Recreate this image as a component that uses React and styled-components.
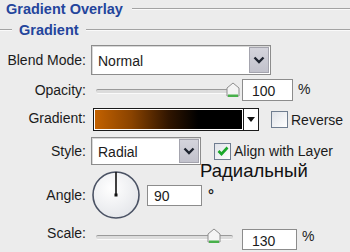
import React from "react";
import styled, { createGlobalStyle } from "styled-components";

const Global = createGlobalStyle`
  html, body { margin: 0; padding: 0; background: #ececec; }
  body { font-family: "Liberation Sans", Arial, sans-serif; color: #1b1b1b; }
`;

const Panel = styled.div`
  width: 350px;
  height: 252px;
  overflow: hidden;
  background: #ececec;
  display: flex;
  flex-direction: column;
  position: relative;
`;

const Etched = styled.div`
  flex: 1;
  height: 0;
  border-top: 1px solid #a3a3a3;
  border-bottom: 1px solid #fafafa;
`;

const TitleRow = styled.div`
  height: 18px;
  display: flex;
  align-items: center;
  gap: 9px;
  padding-left: 6px;
`;

const Title = styled.div`
  font-weight: bold;
  font-size: 14.5px;
  color: #24459c;
  white-space: nowrap;
`;

const SubRow = styled.div`
  margin-top: 3px;
  height: 18px;
  display: flex;
  align-items: center;
  gap: 7px;
`;

const ShortLine = styled(Etched)`
  flex: 0 0 12px;
`;

const Row = styled.div`
  margin-top: ${(p) => p.$mt}px;
  height: ${(p) => p.$h}px;
  display: grid;
  grid-template-columns: 86px auto;
  column-gap: 5px;
  align-items: center;
  position: relative;
`;

const Label = styled.div`
  font-size: 14px;
  text-align: right;
  white-space: nowrap;
  color: #1b1b1b;
  transform: translateY(${(p) => p.$dy ?? 0}px);
`;

const Controls = styled.div`
  display: flex;
  align-items: ${(p) => p.$align ?? "center"};
  gap: ${(p) => p.$gap ?? 5}px;
  height: 100%;
`;

const Select = styled.div`
  box-sizing: border-box;
  width: ${(p) => p.$w}px;
  height: ${(p) => p.$h}px;
  background: #fff;
  border: 1px solid #8c8c8c;
  box-shadow: inset 1px 1px 0 #d8d8d8;
  display: flex;
  align-items: center;
  justify-content: space-between;
  padding: 1px;
  font-size: 14px;
`;

const SelectText = styled.span`
  padding-left: 5px;
  padding-top: 2px;
`;

const DropBtn = styled.div`
  box-sizing: border-box;
  width: 20px;
  height: 100%;
  background: linear-gradient(#d4d4dc, #c2c2cc);
  border: 1px solid #a4a4ae;
  display: flex;
  align-items: center;
  justify-content: center;
`;

const Input = styled.div`
  box-sizing: border-box;
  width: ${(p) => p.$w}px;
  height: ${(p) => p.$h ?? 22}px;
  margin-top: ${(p) => p.$mt ?? 0}px;
  background: #fff;
  border: 1px solid #8c8c8c;
  font-size: 14px;
  padding-left: ${(p) => p.$pl ?? 9}px;
  display: flex;
  align-items: center;
  padding-top: 2px;
`;

const Unit = styled.span`
  font-size: ${(p) => p.$fs ?? 14}px;
  font-weight: ${(p) => (p.$bold ? "bold" : "normal")};
  align-self: flex-start;
  margin-top: ${(p) => p.$mt ?? 0}px;
`;

const SliderWrap = styled.div`
  position: relative;
  width: 141px;
  height: 16px;
  margin-left: 5px;
`;

const Track = styled.div`
  position: absolute;
  left: 0;
  right: 4px;
  top: 7px;
  height: 3px;
  border-radius: 2px;
  background: #dcdcdc;
  border-top: 1px solid #9a9a9a;
  border-bottom: 1px solid #fafafa;
`;

const Thumb = styled.svg`
  position: absolute;
  top: 0;
`;

const GradBox = styled.div`
  box-sizing: border-box;
  height: 23px;
  display: flex;
  margin-left: 2px;
  border: 1px solid #1a1a1a;
`;

const GradFill = styled.div`
  width: 149px;
  height: 100%;
  background: linear-gradient(to right, #c46200 0%, #8a4300 25%, #301500 50%, #000 70%, #000 100%);
  border-right: 1px solid #1a1a1a;
  box-shadow: inset 0 0 0 1px #fff;
`;

const GradArrow = styled.div`
  width: 14px;
  background: #fff;
  display: flex;
  align-items: center;
  justify-content: center;
`;

const Check = styled.div`
  box-sizing: border-box;
  width: ${(p) => p.$s}px;
  height: ${(p) => p.$s}px;
  border: 1px solid #6f7d90;
  background: linear-gradient(135deg, #dfe2e8, #ffffff);
  display: flex;
  align-items: center;
  justify-content: center;
`;

const CheckLabel = styled.label`
  display: flex;
  align-items: center;
  gap: 3px;
  font-size: 14px;
  margin-left: ${(p) => p.$ml ?? 0}px;
`;

const Caption = styled.div`
  position: absolute;
  left: 200px;
  top: -10px;
  font-size: 18.5px;
  color: #111;
  white-space: nowrap;
`;

const Dial = styled.svg`
  display: block;
`;

const Chevron = () => (
  <svg width="12" height="8" viewBox="0 0 12 8">
    <path d="M1.5 1.5 L6 6 L10.5 1.5" fill="none" stroke="#1e2430" strokeWidth="2.4" />
  </svg>
);

const Slider = ({ frac }) => (
  <SliderWrap>
    <Track />
    <Thumb width="14" height="16" viewBox="0 0 14 16" style={{ left: Math.round(frac * 131) - 1 }}>
      <path d="M1 6 L7 1 L13 6 L13 14 L1 14 Z" fill="#f4f4f4" stroke="#8e8e8e" strokeWidth="1" />
      <rect x="2" y="12.5" width="10" height="2.5" fill="#48b04a" />
    </Thumb>
  </SliderWrap>
);

const CheckMark = () => (
  <svg width="12" height="10" viewBox="0 0 12 10">
    <path d="M1.5 5 L4.5 8 L10.5 1.5" fill="none" stroke="#1aa82a" strokeWidth="2.6" />
  </svg>
);

export default function App() {
  return (
    <>
      <Global />
      <Panel>
        <TitleRow>
          <Title>Gradient Overlay</Title>
          <Etched />
        </TitleRow>
        <SubRow>
          <ShortLine />
          <Title>Gradient</Title>
          <Etched />
        </SubRow>

        <Row $mt={6} $h={30}>
          <Label>Blend Mode:</Label>
          <Select $w={180} $h={30}>
            <SelectText>Normal</SelectText>
            <DropBtn><Chevron /></DropBtn>
          </Select>
        </Row>

        <Row $mt={4} $h={22}>
          <Label>Opacity:</Label>
          <Controls $gap={5}>
            <Slider frac={1} />
            <Input $w={51}>100</Input>
            <Unit $mt={2}>%</Unit>
          </Controls>
        </Row>

        <Row $mt={7} $h={23}>
          <Label $dy={-2}>Gradient:</Label>
          <Controls $gap={0}>
            <GradBox>
              <GradFill />
              <GradArrow>
                <svg width="8" height="5" viewBox="0 0 8 5"><path d="M0 0 H8 L4 5 Z" fill="#111" /></svg>
              </GradArrow>
            </GradBox>
            <CheckLabel $ml={12}>
              <Check $s={17} />
              Reverse
            </CheckLabel>
          </Controls>
        </Row>

        <Row $mt={6} $h={28}>
          <Label>Style:</Label>
          <Controls $gap={0}>
            <Select $w={110} $h={28}>
              <SelectText>Radial</SelectText>
              <DropBtn><Chevron /></DropBtn>
            </Select>
            <CheckLabel $ml={13}>
              <Check $s={17}><CheckMark /></Check>
              Align with Layer
            </CheckLabel>
          </Controls>
        </Row>

        <Row $mt={5} $h={48}>
          <Label>Angle:</Label>
          <Controls $gap={6}>
            <Dial width="50" height="50" viewBox="0 0 50 50">
              <defs>
                <radialGradient id="dg" cx="40%" cy="35%" r="70%">
                  <stop offset="0" stopColor="#ffffff" />
                  <stop offset="1" stopColor="#e4e6ea" />
                </radialGradient>
              </defs>
              <circle cx="25" cy="25" r="23" fill="url(#dg)" stroke="#4a5264" strokeWidth="1.6" />
              <line x1="25" y1="25" x2="25" y2="2" stroke="#111" strokeWidth="1.6" />
              <rect x="23.5" y="23.5" width="3" height="3" fill="#111" />
            </Dial>
            <Input $w={55} $h={21} $pl={6}>90</Input>
            <Unit $mt={16} $fs={15} $bold>°</Unit>
          </Controls>
          <Caption>Радиальный</Caption>
        </Row>

        <Row $mt={10} $h={21}>
          <Label $dy={-6}>Scale:</Label>
          <Controls $gap={5} $align="flex-start">
            <Slider frac={0.857} />
            <Input $w={55} $h={21} $mt={1}>130</Input>
            <Unit $mt={0}>%</Unit>
          </Controls>
        </Row>
      </Panel>
    </>
  );
}
